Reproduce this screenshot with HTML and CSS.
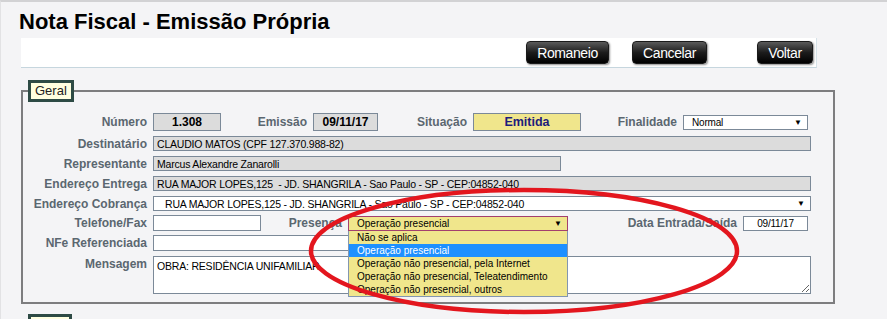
FILE: index.html
```html
<!DOCTYPE html>
<html lang="pt-BR">
<head>
  <meta charset="UTF-8">
  <meta name="viewport" content="width=device-width, initial-scale=1.0">
  <title>Nota Fiscal - Emissão Própria</title>
  <link rel="stylesheet" href="styles.css">
</head>
<body>
  <h1 class="title">Nota Fiscal - Emissão Própria</h1>

  <div class="toolbar">
    <button class="btn btn-romaneio">Romaneio</button>
    <button class="btn btn-cancelar">Cancelar</button>
    <button class="btn btn-voltar">Voltar</button>
  </div>

  <fieldset class="group">
    <legend>Geral</legend>

    <div class="row row-1">
      <label class="lbl">Número</label>
      <input class="field ro num" type="text" value="1.308" readonly>
      <label class="lbl lbl-emissao">Emissão</label>
      <input class="field ro num date" type="text" value="09/11/17" readonly>
      <label class="lbl lbl-situacao">Situação</label>
      <div class="field status">Emitida</div>
      <label class="lbl lbl-finalidade">Finalidade</label>
      <div class="select sel-finalidade"><span>Normal</span><i>&#9660;</i></div>
    </div>

    <div class="row">
      <label class="lbl">Destinatário</label>
      <input class="field ro wide" type="text" value="CLAUDIO MATOS (CPF 127.370.988-82)" readonly>
    </div>

    <div class="row">
      <label class="lbl">Representante</label>
      <input class="field ro mid" type="text" value="Marcus Alexandre Zanarolli" readonly>
    </div>

    <div class="row">
      <label class="lbl">Endereço Entrega</label>
      <input class="field ro wide" type="text" value="RUA MAJOR LOPES,125  - JD. SHANGRILA - Sao Paulo - SP - CEP:04852-040" readonly>
    </div>

    <div class="row">
      <label class="lbl">Endereço Cobrança</label>
      <div class="select wide sel-cobranca"><span>RUA MAJOR LOPES,125 - JD. SHANGRILA - Sao Paulo - SP - CEP:04852-040</span><i>&#9660;</i></div>
    </div>

    <div class="row row-6">
      <label class="lbl">Telefone/Fax</label>
      <input class="field phone" type="text" value="">
      <label class="lbl lbl-presenca">Presença</label>
      <div class="select-wrap">
        <div class="select sel-presenca"><span>Operação presencial</span><i>&#9660;</i></div>
        <ul class="dropdown">
          <li>Não se aplica</li>
          <li class="active">Operação presencial</li>
          <li>Operação não presencial, pela Internet</li>
          <li>Operação não presencial, Teleatendimento</li>
          <li>Operação não presencial, outros</li>
        </ul>
      </div>
      <label class="lbl lbl-data">Data Entrada/Saída</label>
      <input class="field small-date" type="text" value="09/11/17">
    </div>

    <div class="row row-7">
      <label class="lbl">NFe Referenciada</label>
      <input class="field nfe" type="text" value="">
    </div>

    <div class="row row-8">
      <label class="lbl">Mensagem</label>
      <textarea class="field memo">OBRA: RESIDÊNCIA UNIFAMILIAR</textarea>
    </div>
  </fieldset>

  <fieldset class="group group-next">
    <legend class="legend-empty"></legend>
  </fieldset>

  <svg class="markup" width="887" height="319" viewBox="0 0 887 319">
    <ellipse cx="524" cy="251" rx="213" ry="61" fill="none" stroke="#e3161e" stroke-width="4.5"/>
  </svg>
</body>
</html>
```

FILE: styles.css
```css
* {
  box-sizing: border-box;
}

html {
  background-color: #f4f4f6;
}

body {
  margin: 0;
  padding-left: 20px;
  border-top: 2px solid #d2d2d4;
  border-left: 1px solid #e2e2e4;
  font-family: "Liberation Sans", Arial, sans-serif;
  color: #000;
  overflow: hidden;
  height: 319px;
}

.title {
  margin: 7px 0 4px -2px;
  font-size: 22px;
  line-height: 25px;
  font-weight: bold;
  color: #000;
}

/* barra de botoes */
.toolbar {
  width: 796px;
  height: 30px;
  display: flex;
  align-items: center;
  justify-content: flex-end;
  padding-right: 3px;
  background-color: #fff;
  border-bottom: 1px solid #c6d6de;
  border-right: 1px solid #d6e2e8;
}

.btn {
  height: 23px;
  padding: 0;
  border: 1px solid #1a1a1a;
  border-radius: 4px;
  background: linear-gradient(#5a5a5a, #1c1c1c 50%, #000);
  box-shadow: 1px 1px 2px rgba(0, 0, 0, 0.45);
  color: #fff;
  font-family: "Liberation Sans", Arial, sans-serif;
  font-size: 14px;
  letter-spacing: -0.4px;
  cursor: pointer;
}

.btn-romaneio {
  width: 83px;
  margin-right: 23px;
}

.btn-cancelar {
  width: 75px;
  margin-right: 50px;
}

.btn-voltar {
  width: 56px;
}

/* grupos */
.group {
  width: 814px;
  margin: 12px 0 0 0;
  padding: 11px 0 8px 0;
  border: 2px solid #7d7d7f;
  min-inline-size: 0;
}

.group legend {
  margin-left: 5px;
  padding: 0 4px;
  border: 3px solid #2e4b45;
  background-color: #ffffe0;
  font-size: 13px;
  line-height: 16px;
  color: #222;
}

.group .legend-empty {
  width: 44px;
  height: 22px;
}

.group-next {
  margin-top: 10px;
  height: 30px;
  padding: 0;
}

.row {
  display: flex;
  align-items: center;
  height: 15px;
  margin-top: 5px;
}

.row-1 {
  height: 18px;
  margin-top: 0;
}

.row-6,
.row-7 {
  height: 16px;
  margin-top: 4px;
}

.row-8 {
  height: 38px;
  align-items: flex-start;
  margin-top: 5px;
}

.lbl {
  flex: none;
  width: 124px;
  margin-right: 6px;
  text-align: right;
  font-size: 12px;
  font-weight: bold;
  line-height: 14px;
  color: #5b6770;
  white-space: nowrap;
}

.row-8 .lbl {
  margin-top: 1px;
}

.lbl-emissao { width: 86px; }
.lbl-situacao { width: 89px; }
.lbl-finalidade { width: 96px; }
.lbl-presenca { width: 81px; }
.lbl-data { width: 169px; }

/* campos */
.field {
  flex: none;
  height: 15px;
  margin: 0;
  padding: 0 3px;
  border: 1px solid #7b8998;
  border-radius: 0;
  background-color: #fff;
  font-family: "Liberation Sans", Arial, sans-serif;
  font-size: 10.5px;
  letter-spacing: -0.2px;
  color: #000;
  outline: none;
}

.ro {
  background-color: #dcdcdc;
}

.num {
  width: 68px;
  height: 18px;
  text-align: center;
  font-size: 12px;
  font-weight: bold;
  letter-spacing: 0;
}

.date {
  width: 65px;
}

.status {
  width: 108px;
  height: 18px;
  background-color: #f0e68c;
  text-align: center;
  font-size: 12.5px;
  font-weight: bold;
  line-height: 16px;
  letter-spacing: 0;
  color: #1c1c7c;
}

.wide {
  width: 658px;
}

.mid {
  width: 408px;
}

.phone {
  width: 108px;
  height: 16px;
}

.nfe {
  width: 390px;
  height: 16px;
}

.small-date {
  width: 65px;
  align-self: flex-end;
  text-align: center;
  font-size: 10px;
}

.memo {
  width: 658px;
  height: 38px;
  padding: 3px 3px;
  resize: both;
  font-size: 10.5px;
  line-height: 12px;
}

/* selects */
.select {
  flex: none;
  display: flex;
  align-items: center;
  justify-content: space-between;
  height: 15px;
  padding: 0 5px 0 8px;
  border: 1px solid #7b8998;
  background-color: #fff;
  font-size: 10.5px;
  letter-spacing: -0.2px;
  white-space: nowrap;
}

.select i {
  font-style: normal;
  font-size: 8px;
  letter-spacing: 0;
}

.sel-finalidade {
  width: 125px;
  font-size: 10px;
}

.sel-cobranca {
  padding-left: 11px;
}

.select-wrap {
  position: relative;
  flex: none;
  align-self: flex-end;
}

.sel-presenca {
  width: 220px;
  background-color: #f0e68c;
  border-color: #a3406e;
  font-size: 10px;
  letter-spacing: 0;
}

.dropdown {
  position: absolute;
  top: 100%;
  left: 0;
  z-index: 2;
  width: 220px;
  margin: 0;
  padding: 0;
  list-style: none;
  border: 1px solid #8396b0;
  border-top: none;
  background-color: #f0e68c;
}

.dropdown li {
  height: 13px;
  padding-left: 8px;
  font-size: 10px;
  line-height: 13px;
  white-space: nowrap;
}

.dropdown li.active {
  background-color: #1e90ff;
  color: #fff;
}

/* marca vermelha por cima */
.markup {
  position: absolute;
  top: 0;
  left: 0;
  z-index: 5;
  pointer-events: none;
}
```
